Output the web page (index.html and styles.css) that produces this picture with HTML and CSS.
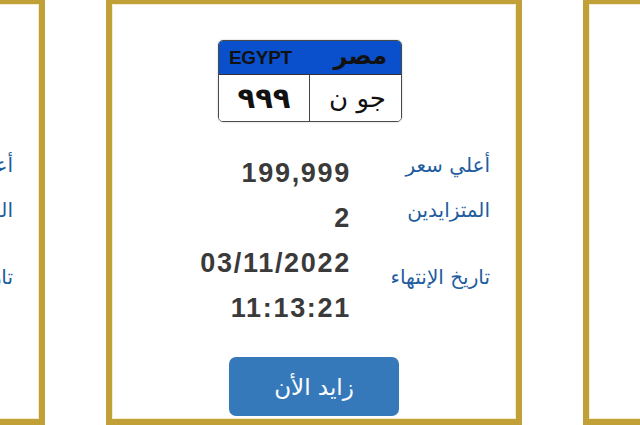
FILE: index.html
```html
<!DOCTYPE html>
<html lang="ar">
<head>
<meta charset="utf-8">
<link rel="stylesheet" href="styles.css">
</head>
<body>
<div class="row">
  <div class="card">
    <div class="plate">
      <div class="plate-top"><span class="p-en">EGYPT</span><span class="p-ar">مصر</span></div>
      <div class="plate-bottom"><span class="p-num">٩٩٩</span><span class="p-let">جو ن</span></div>
    </div>
    <div class="info">
      <div class="label">أعلي سعر</div><div class="value">199,999</div>
      <div class="label">المتزايدين</div><div class="value">2</div>
      <div class="label">تاريخ الإنتهاء</div><div class="value">03/11/2022<br>11:13:21</div>
    </div>
    <button class="bid">زايد الأن</button>
  </div>
  <div class="card">
    <div class="plate">
      <div class="plate-top"><span class="p-en">EGYPT</span><span class="p-ar">مصر</span></div>
      <div class="plate-bottom"><span class="p-num">٩٩٩</span><span class="p-let">جو ن</span></div>
    </div>
    <div class="info">
      <div class="label">أعلي سعر</div><div class="value">199,999</div>
      <div class="label">المتزايدين</div><div class="value">2</div>
      <div class="label">تاريخ الإنتهاء</div><div class="value">03/11/2022<br>11:13:21</div>
    </div>
    <button class="bid">زايد الأن</button>
  </div>
  <div class="card">
    <div class="plate">
      <div class="plate-top"><span class="p-en">EGYPT</span><span class="p-ar">مصر</span></div>
      <div class="plate-bottom"><span class="p-num">٩٩٩</span><span class="p-let">جو ن</span></div>
    </div>
    <div class="info">
      <div class="label">أعلي سعر</div><div class="value">199,999</div>
      <div class="label">المتزايدين</div><div class="value">2</div>
      <div class="label">تاريخ الإنتهاء</div><div class="value">03/11/2022<br>11:13:21</div>
    </div>
    <button class="bid">زايد الأن</button>
  </div>
</div>
</body>
</html>
```

FILE: styles.css
```css
html, body {
  margin: 0;
  padding: 0;
  background: #ffffff;
  overflow: hidden;
  width: 640px;
  height: 425px;
  font-family: "Liberation Sans", "DejaVu Sans", sans-serif;
}

.row {
  display: flex;
  gap: 61px;
  margin-left: -371px;
  margin-top: -2px;
}

.card {
  flex: 0 0 auto;
  width: 416px;
  height: 427px;
  box-sizing: border-box;
  border: 6px solid #c1a038;
  box-shadow: inset 0 0 0 1px #f4ecd0;
  background: #fff;
  display: flex;
  flex-direction: column;
  padding-top: 36px;
}

.plate {
  margin-left: 106px;
  width: 184px;
  height: 82px;
  box-sizing: border-box;
  border: 1.5px solid #4a4a4a;
  border-radius: 5px;
  overflow: hidden;
  display: flex;
  flex-direction: column;
  box-shadow: 0 0 2px rgba(0,0,0,0.25);
}

.plate-top {
  height: 33px;
  background: #0a50cc;
  border-bottom: 1.5px solid #333;
  display: flex;
  justify-content: space-between;
  align-items: center;
  padding: 0 14px 0 10px;
}

.p-en {
  font-weight: bold;
  font-size: 19px;
  color: #111;
  letter-spacing: -0.3px;
}

.p-ar {
  font-family: "DejaVu Sans", sans-serif;
  font-weight: bold;
  font-size: 24px;
  color: #111;
  direction: rtl;
  line-height: 1;
  margin-top: -4px;
}

.plate-bottom {
  flex: 1;
  display: flex;
  background: #fff;
}

.p-num {
  width: 90px;
  border-right: 1.5px solid #444;
  display: flex;
  align-items: center;
  justify-content: center;
  font-family: "DejaVu Sans", sans-serif;
  font-weight: bold;
  font-size: 29px;
  color: #111;
}

.p-let {
  flex: 1;
  display: flex;
  align-items: center;
  justify-content: center;
  font-family: "DejaVu Sans", sans-serif;
  font-size: 26px;
  color: #111;
  direction: rtl;
  padding-left: 4px;
}

.info {
  direction: rtl;
  display: grid;
  grid-template-columns: 97px auto;
  column-gap: 44px;
  justify-content: start;
  margin-top: 29px;
  margin-right: 26px;
}

.label {
  align-self: center;
  font-family: "DejaVu Sans", sans-serif;
  font-size: 20px;
  color: #1f5d9e;
  white-space: nowrap;
  margin-top: -18px;
}

.value {
  direction: ltr;
  text-align: right;
  font-weight: bold;
  font-size: 27px;
  letter-spacing: 1.7px;
  line-height: 45px;
  color: #3a3a3a;
  margin-right: -2px;
}

.bid {
  align-self: center;
  margin-top: 26px;
  width: 170px;
  height: 59px;
  border: none;
  border-radius: 7px;
  background: #3679bb;
  color: #fff;
  font-family: "DejaVu Sans", sans-serif;
  font-size: 23px;
  direction: rtl;
}
```
